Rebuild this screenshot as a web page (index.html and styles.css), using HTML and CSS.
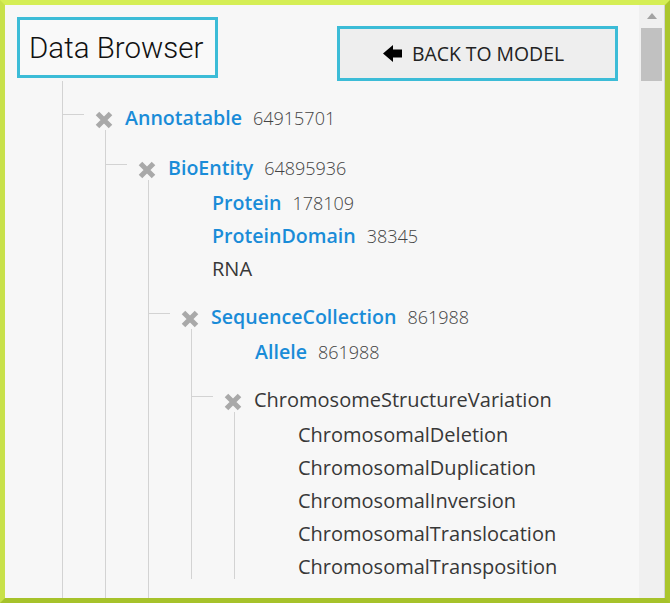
FILE: index.html
```html
<!DOCTYPE html>
<html>
<head>
<meta charset="utf-8">
<link rel="stylesheet" href="styles.css">
</head>
<body>
<div class="frame">
  <div class="viewport">
    <div class="top">
      <h1 class="title">Data Browser</h1>
      <button class="back">
        <svg class="arrow" viewBox="0 0 19 17" width="19" height="17"><path d="M0 8.5 L10 0 L10 4.5 L19 4.5 L19 12.5 L10 12.5 L10 17 Z" fill="#000"/></svg>
        <span>BACK TO MODEL</span>
      </button>
    </div>
    <ul class="tree root">
      <li class="node">
        <div class="row"><span class="conn"></span><svg class="x" viewBox="0 0 18 18"><path d="M2.5 2.5 L15.5 15.5 M15.5 2.5 L2.5 15.5" stroke="#a9a9a9" stroke-width="5"/></svg><span class="label link">Annotatable</span><span class="count">64915701</span></div>
        <ul class="tree sub">
          <li class="node">
            <div class="row"><span class="conn"></span><svg class="x" viewBox="0 0 18 18"><path d="M2.5 2.5 L15.5 15.5 M15.5 2.5 L2.5 15.5" stroke="#a9a9a9" stroke-width="5"/></svg><span class="label link">BioEntity</span><span class="count">64895936</span></div>
            <ul class="tree sub more">
              <li class="leaf"><span class="label link">Protein</span><span class="count">178109</span></li>
              <li class="leaf"><span class="label link">ProteinDomain</span><span class="count">38345</span></li>
              <li class="leaf"><span class="label">RNA</span></li>
              <li class="node">
                <div class="row"><span class="conn"></span><svg class="x" viewBox="0 0 18 18"><path d="M2.5 2.5 L15.5 15.5 M15.5 2.5 L2.5 15.5" stroke="#a9a9a9" stroke-width="5"/></svg><span class="label link">SequenceCollection</span><span class="count">861988</span></div>
                <ul class="tree sub">
                  <li class="leaf"><span class="label link">Allele</span><span class="count">861988</span></li>
                  <li class="node">
                    <div class="row"><span class="conn"></span><svg class="x" viewBox="0 0 18 18"><path d="M2.5 2.5 L15.5 15.5 M15.5 2.5 L2.5 15.5" stroke="#a9a9a9" stroke-width="5"/></svg><span class="label">ChromosomeStructureVariation</span></div>
                    <ul class="tree sub">
                      <li class="leaf"><span class="label">ChromosomalDeletion</span></li>
                      <li class="leaf"><span class="label">ChromosomalDuplication</span></li>
                      <li class="leaf"><span class="label">ChromosomalInversion</span></li>
                      <li class="leaf"><span class="label">ChromosomalTranslocation</span></li>
                      <li class="leaf"><span class="label">ChromosomalTransposition</span></li>
                    </ul>
                  </li>
                </ul>
              </li>
            </ul>
          </li>
        </ul>
      </li>
    </ul>
  </div>
  <div class="scrollbar">
    <span class="up"></span>
    <span class="thumb"></span>
  </div>
</div>
</body>
</html>
```
FILE: styles.css
```css
html, body {
  margin: 0;
  padding: 0;
  background: #f7f7f7;
}
body {
  font-family: "Open Sans", "Noto Sans", sans-serif;
}
.frame {
  display: flex;
  width: 670px;
  height: 603px;
  box-sizing: border-box;
  border: 5px solid;
  border-color: #d5ee55 #abc62d #a6c22a #c8e14a;
  background: #f7f7f7;
}
.viewport {
  flex: 1;
  overflow: hidden;
  padding: 12px 21px 0 12px;
}
.top {
  display: flex;
  justify-content: space-between;
  align-items: flex-start;
}
.title {
  margin: 0;
  height: 61px;
  box-sizing: border-box;
  border: 3px solid #3cbcd7;
  padding: 0 12px 0 9px;
  display: flex;
  align-items: center;
  font-family: Roboto, sans-serif;
  font-weight: 300;
  font-size: 29.5px;
  color: #111;
  background: #f9f9f9;
}
.back {
  margin-top: 9px;
  width: 281px;
  height: 55px;
  box-sizing: border-box;
  border: 3px solid #3cbcd7;
  background: #eeeeee;
  display: flex;
  align-items: center;
  justify-content: center;
  gap: 10px;
  padding: 0 8px 0 0;
  font-family: "Open Sans", sans-serif;
  font-size: 19.4px;
  color: #222;
}
.arrow {
  flex: none;
}
.tree {
  list-style: none;
  margin: 0;
  padding: 0;
  border-left: 1px solid #d3d3d3;
}
.root {
  margin-left: 45px;
  padding-top: 3px;
}
.sub {
  margin-left: 42px;
  padding-top: 2px;
}
.more {
  padding-bottom: 60px;
}
.node {
  margin-top: 24px;
}
.row {
  display: flex;
  align-items: center;
  height: 24px;
}
.root > .node:first-child {
  margin-top: 22px;
}
.conn {
  flex: none;
  width: 21px;
  height: 1px;
  background: #d3d3d3;
  margin-bottom: 8px;
}
.x {
  flex: none;
  width: 18px;
  height: 18px;
  margin: 4px 12px 0 11px;
}
.leaf {
  display: flex;
  align-items: center;
  height: 24px;
  margin-top: 9px;
  padding-left: 63px;
}
.label {
  font-size: 20px;
  line-height: 24px;
  color: #383838;
  white-space: nowrap;
}
.link {
  font-size: 19.6px;
  color: #1a8cd8;
  font-weight: 600;
}
.count {
  margin-left: 11px;
  font-size: 18px;
  line-height: 24px;
  font-weight: 300;
  color: #444;
}
.scrollbar {
  flex: none;
  width: 25px;
  background: #f0f0f0;
  border-right: 1px solid #d2d2d2;
  display: flex;
  flex-direction: column;
  align-items: center;
}
.up {
  margin-top: 8px;
  width: 0;
  height: 0;
  border-left: 5px solid transparent;
  border-right: 5px solid transparent;
  border-bottom: 6px solid #a3a3a3;
}
.thumb {
  margin-top: 9px;
  width: 21px;
  height: 53px;
  background: #c1c1c1;
}
```
